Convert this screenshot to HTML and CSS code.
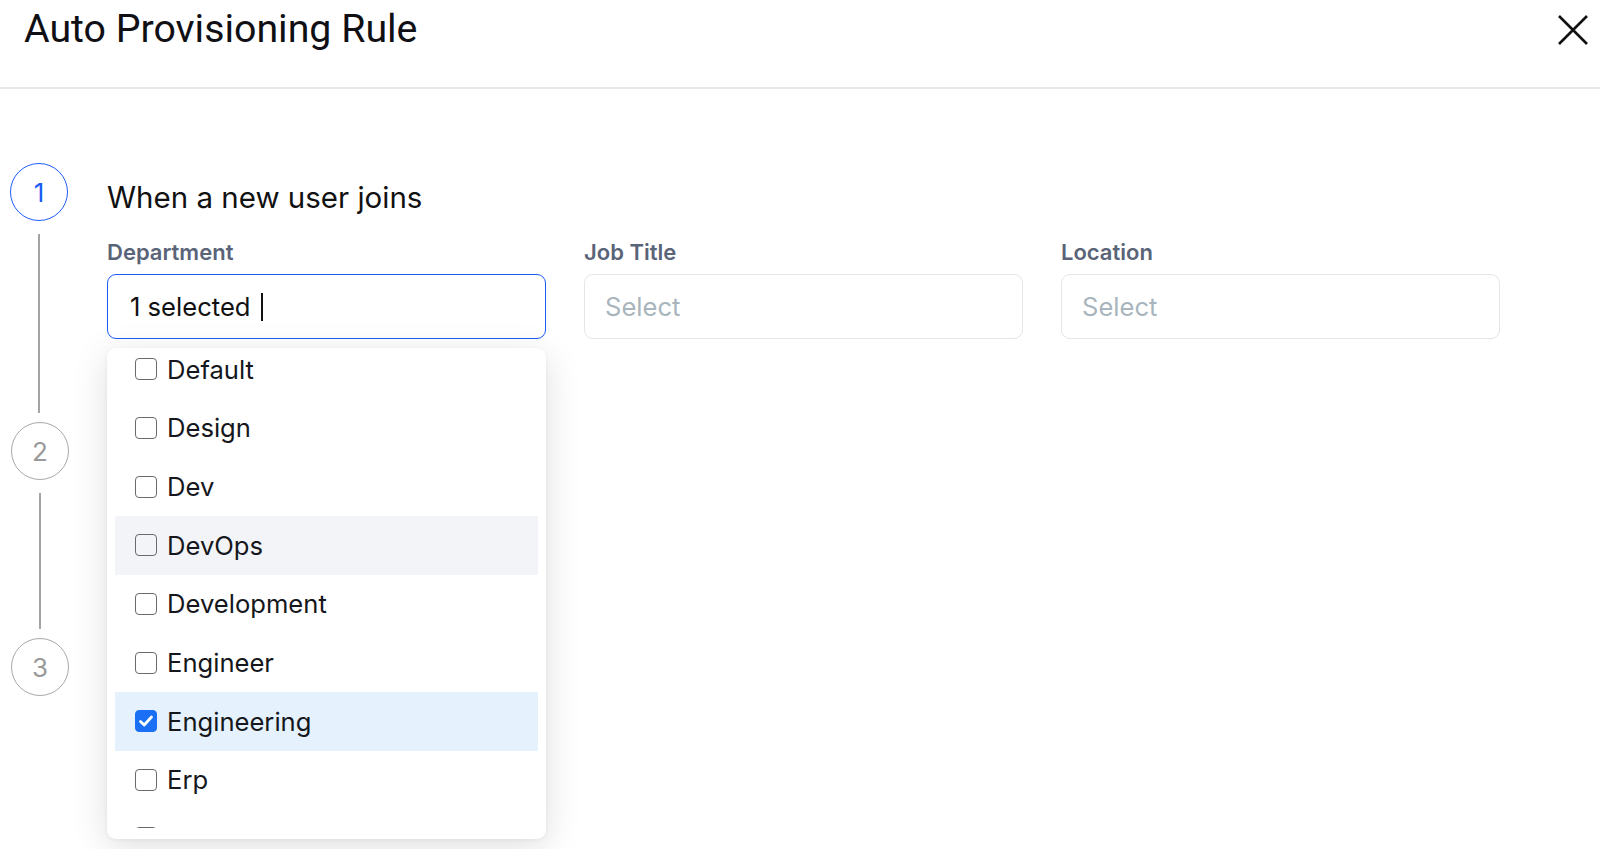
FILE: index.html
```html
<!DOCTYPE html>
<html lang="en">
<head>
<meta charset="utf-8">
<title>Auto Provisioning Rule</title>
<link rel="stylesheet" href="styles.css">
</head>
<body>
<header class="header">
  <h1 class="title">Auto Provisioning Rule</h1>
  <button class="close" aria-label="Close">
    <svg width="34" height="34" viewBox="0 0 34 34"><path d="M3 3 L31 31 M31 3 L3 31" stroke="#111" stroke-width="2.6" fill="none"/></svg>
  </button>
</header>
<main class="steps">
  <section class="step step-1">
    <div class="rail"><div class="circle circle-active">1</div><div class="line"></div></div>
    <div class="step-body">
      <h2 class="step-title">When a new user joins</h2>
      <div class="fields">
        <div class="field">
          <div class="label">Department</div>
          <div class="select select-focus"><span class="value">1 selected</span><span class="caret"></span></div>
          <div class="dropdown">
            <div class="viewport">
              <ul class="options">
                <li class="option"><span class="check"></span>Default</li>
                <li class="option"><span class="check"></span>Design</li>
                <li class="option"><span class="check"></span>Dev</li>
                <li class="option option-hover"><span class="check"></span>DevOps</li>
                <li class="option"><span class="check"></span>Development</li>
                <li class="option"><span class="check"></span>Engineer</li>
                <li class="option option-selected"><span class="check check-on"><svg width="22" height="22" viewBox="0 0 22 22"><path d="M5.5 11.5 L9.2 15 L16.5 7" stroke="#fff" stroke-width="2.8" fill="none" stroke-linecap="round" stroke-linejoin="round"/></svg></span>Engineering</li>
                <li class="option"><span class="check"></span>Erp</li>
                <li class="option option-last"><span class="check"></span>Finance</li>
              </ul>
            </div>
          </div>
        </div>
        <div class="field">
          <div class="label">Job Title</div>
          <div class="select select-empty"><span class="placeholder">Select</span></div>
        </div>
        <div class="field">
          <div class="label">Location</div>
          <div class="select select-empty"><span class="placeholder">Select</span></div>
        </div>
      </div>
    </div>
  </section>
  <section class="step step-2">
    <div class="rail rail-muted"><div class="circle">2</div><div class="line"></div></div>
    <div class="step-body">
      <h2 class="step-title step-title-muted">Assign groups</h2>
    </div>
  </section>
  <section class="step step-3">
    <div class="rail rail-muted"><div class="circle">3</div></div>
    <div class="step-body">
      <h2 class="step-title step-title-muted">Provision apps</h2>
    </div>
  </section>
</main>
</body>
</html>
```
FILE: styles.css
```css
* { box-sizing: border-box; }
html, body { margin: 0; padding: 0; background: #fff; }
body { font-family: Inter, "Noto Sans", sans-serif; color: #111; width: 1600px; height: 849px; overflow: hidden; }

.header {
  height: 89px;
  border-bottom: 2px solid #e8e8e8;
  display: flex;
  justify-content: space-between;
  align-items: flex-start;
  padding: 10px 10px 0 24px;
}
.title {
  margin: 0;
  font-family: Roboto, "Liberation Sans", sans-serif;
  font-weight: 400;
  font-size: 39.3px;
  line-height: 39px;
  color: #0f0f14;
}
.close {
  border: 0;
  background: none;
  padding: 0;
  margin-top: 3px;
  width: 34px;
  height: 34px;
  cursor: pointer;
}
.close svg { display: block; }

.steps { padding-top: 74px; }
.step { display: flex; }
.step-1 { min-height: 259px; }
.step-2 { min-height: 216px; }
.rail {
  width: 58px;
  margin-left: 10px;
  margin-right: 39px;
  display: flex;
  flex-direction: column;
  align-items: center;
}
.rail-muted { transform: translateX(1px); }
.circle {
  width: 58px;
  height: 58px;
  flex: none;
  border-radius: 50%;
  border: 1.5px solid #a9a9a9;
  color: #9a9a9a;
  font-size: 26px;
  display: flex;
  align-items: center;
  justify-content: center;
}
.circle-active { border-color: #1c5cf5; color: #1c5cf5; }
.line {
  flex: 1;
  width: 1.5px;
  background: #a3a3a3;
  margin: 13px 0 9px;
}
.step-body { flex: 1; padding-top: 17px; }
.step-title {
  margin: 0;
  font-size: 29.5px;
  line-height: 34px;
  font-weight: 400;
  color: #111;
}
.step-title-muted { color: #9ca3af; }

.fields {
  display: grid;
  grid-template-columns: repeat(3, 439px);
  column-gap: 38px;
  margin-top: 25px;
}
.field { position: relative; }
.label {
  font-size: 22px;
  line-height: 26px;
  font-weight: 600;
  color: #5a6478;
  margin-bottom: 9px;
}
.select {
  height: 65px;
  border: 1.5px solid #e3e5e8;
  border-radius: 9px;
  display: flex;
  align-items: center;
  padding-left: 22px;
  font-size: 25.6px;
  line-height: 30px;
  background: #fff;
}
.select-empty { padding-left: 20px; }
.select-focus { border-color: #1c5cf5; }
.value { color: #111; }
.caret {
  width: 2px;
  height: 28px;
  background: #111;
  margin-left: 10px;
}
.placeholder { color: #a9b5bd; }

.dropdown {
  position: absolute;
  left: 0;
  top: 109px;
  width: 439px;
  height: 491px;
  padding-bottom: 11px;
  background: #fff;
  border-radius: 9px;
  box-shadow: 0 8px 36px rgba(0, 0, 0, 0.13), 0 1px 4px rgba(0, 0, 0, 0.05);
  overflow: hidden;
  z-index: 5;
}
.viewport { height: 100%; overflow: hidden; }
.options {
  list-style: none;
  margin: -8px 0 0;
  padding: 0 8px;
}
.option {
  height: 58.67px;
  display: flex;
  align-items: center;
  padding-left: 20px;
  font-size: 25.6px;
  color: #15171c;
}
.option-last .check { transform: translateY(-1px); }
.option-hover { background: #f3f4f8; }
.option-selected { background: #e5f2fd; }
.check {
  width: 22px;
  height: 22px;
  border: 1.5px solid #6a6a6a;
  border-radius: 4px;
  margin-right: 10px;
  flex: none;
  display: flex;
}
.check-on { background: #1a6ff4; border-color: #1a6ff4; }
.check-on svg { margin: -1.5px; }
```
